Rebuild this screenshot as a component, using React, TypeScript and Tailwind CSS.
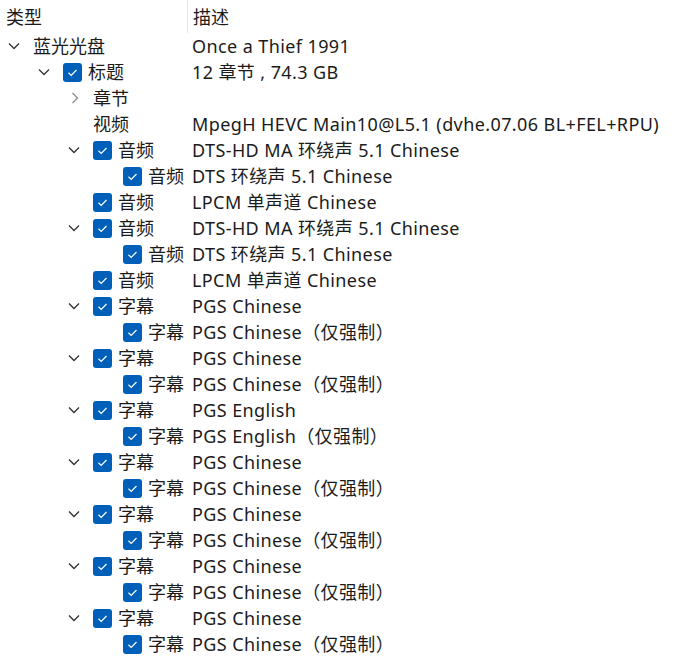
import React from 'react';

type Row = {
  level: number;
  chevron?: 'open' | 'closed';
  checked?: boolean;
  label: string;
  desc?: string;
};

const subPair = (desc: string, child: string): Row[] => [
  { level: 2, chevron: 'open', checked: true, label: '字幕', desc },
  { level: 3, checked: true, label: '字幕', desc: child },
];

const rows: Row[] = [
  { level: 0, chevron: 'open', label: '蓝光光盘', desc: 'Once a Thief 1991' },
  { level: 1, chevron: 'open', checked: true, label: '标题', desc: '12 章节 , 74.3 GB' },
  { level: 2, chevron: 'closed', label: '章节' },
  { level: 2, label: '视频', desc: 'MpegH HEVC Main10@L5.1 (dvhe.07.06 BL+FEL+RPU)' },
  { level: 2, chevron: 'open', checked: true, label: '音频', desc: 'DTS-HD MA 环绕声 5.1 Chinese' },
  { level: 3, checked: true, label: '音频', desc: 'DTS 环绕声 5.1 Chinese' },
  { level: 2, checked: true, label: '音频', desc: 'LPCM 单声道 Chinese' },
  { level: 2, chevron: 'open', checked: true, label: '音频', desc: 'DTS-HD MA 环绕声 5.1 Chinese' },
  { level: 3, checked: true, label: '音频', desc: 'DTS 环绕声 5.1 Chinese' },
  { level: 2, checked: true, label: '音频', desc: 'LPCM 单声道 Chinese' },
  ...subPair('PGS Chinese', 'PGS Chinese（仅强制）'),
  ...subPair('PGS Chinese', 'PGS Chinese（仅强制）'),
  ...subPair('PGS English', 'PGS English（仅强制）'),
  ...subPair('PGS Chinese', 'PGS Chinese（仅强制）'),
  ...subPair('PGS Chinese', 'PGS Chinese（仅强制）'),
  ...subPair('PGS Chinese', 'PGS Chinese（仅强制）'),
  ...subPair('PGS Chinese', 'PGS Chinese（仅强制）'),
];

function Chevron({ kind }: { kind?: 'open' | 'closed' }) {
  if (!kind) return null;
  if (kind === 'open')
    return (
      <svg width="12" height="8" viewBox="0 0 12 8" className="ml-[8px]">
        <path d="M1 1.5 L6 6.5 L11 1.5" fill="none" stroke="#333" strokeWidth="1.3" />
      </svg>
    );
  return (
    <svg width="8" height="12" viewBox="0 0 8 12" className="ml-[11px]">
      <path d="M1.5 1 L6.5 6 L1.5 11" fill="none" stroke="#8a8a8a" strokeWidth="1.3" />
    </svg>
  );
}

function Check() {
  return (
    <span className="mr-[6px] flex h-[19px] w-[19px] shrink-0 items-center justify-center rounded-[3px] bg-[#005fb8]">
      <svg width="19" height="19" viewBox="0 0 19 19">
        <path d="M5.5 9.8 L8.2 12.4 L13.5 7" fill="none" stroke="#fff" strokeWidth="1.2" />
      </svg>
    </span>
  );
}

export default function App() {
  return (
    <div
      className="h-[660px] w-[689px] overflow-hidden bg-white text-[18px] text-[#1b1b1b]"
      style={{ fontFamily: '"Noto Sans", "Noto Sans CJK SC", sans-serif' }}
    >
      <div className="flex h-[33px] items-center">
        <div className="w-[187px] pl-[6px] leading-[26px]">类型</div>
        <div className="h-[33px] w-px bg-[#e5e5e5]" />
        <div className="pl-[5px] leading-[26px]">描述</div>
      </div>
      {rows.map((r, i) => (
        <div key={i} className="flex h-[26px] items-center whitespace-nowrap leading-[26px]">
          <div className="flex w-[192px] shrink-0 items-center overflow-hidden" style={{ paddingLeft: r.level * 30 }}>
            <div className="flex w-[33px] shrink-0 items-center">
              <Chevron kind={r.chevron} />
            </div>
            {r.checked && <Check />}
            <span>{r.label}</span>
          </div>
          <div className="tracking-[0.4px]">{r.desc}</div>
        </div>
      ))}
    </div>
  );
}
